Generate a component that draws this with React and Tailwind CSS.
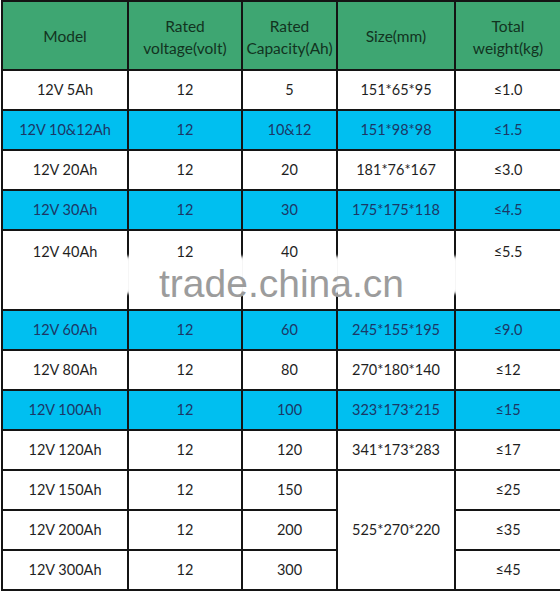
import React from "react";

const rows = [
  { model: "12V 5Ah", cap: "5", size: "151*65*95", weight: "≤1.0" },
  { model: "12V 10&12Ah", cap: "10&12", size: "151*98*98", weight: "≤1.5", blue: true },
  { model: "12V 20Ah", cap: "20", size: "181*76*167", weight: "≤3.0" },
  { model: "12V 30Ah", cap: "30", size: "175*175*118", weight: "≤4.5", blue: true },
  { model: "12V 40Ah", cap: "40", size: "", weight: "≤5.5", tall: true },
  { model: "12V 60Ah", cap: "60", size: "245*155*195", weight: "≤9.0", blue: true },
  { model: "12V 80Ah", cap: "80", size: "270*180*140", weight: "≤12" },
  { model: "12V 100Ah", cap: "100", size: "323*173*215", weight: "≤15", blue: true },
  { model: "12V 120Ah", cap: "120", size: "341*173*283", weight: "≤17" },
  { model: "12V 150Ah", cap: "150", size: "525*270*220", weight: "≤25", span: 3 },
  { model: "12V 200Ah", cap: "200", weight: "≤35", skip: true },
  { model: "12V 300Ah", cap: "300", weight: "≤45", skip: true },
];

const cell = "border-2 border-[#141414] text-center";

const App = () => {
  return (
    <div
      className="relative w-[560px] h-[591px] bg-white overflow-hidden"
      style={{ fontFamily: "Lato, 'Open Sans', sans-serif" }}
    >
      <table className="table-fixed border-collapse w-[559px] ml-[1px] text-[14.5px]">
        <colgroup>
          <col className="w-[126px]" />
          <col className="w-[114px]" />
          <col className="w-[95px]" />
          <col className="w-[118px]" />
          <col className="w-[106px]" />
        </colgroup>
        <thead>
          {/* Header */}
          <tr className="h-[69px] bg-[#3ea672] text-[#12331f] text-[15.5px] leading-[22px]">
            <th className={`${cell} font-normal`}>Model</th>
            <th className={`${cell} font-normal pt-[3px]`}>
              Rated
              <br />
              voltage(volt)
            </th>
            <th className={`${cell} font-normal pt-[3px]`}>
              Rated
              <br />
              Capacity(Ah)
            </th>
            <th className={`${cell} font-normal`}>Size(mm)</th>
            <th className={`${cell} font-normal pt-[3px]`}>
              Total
              <br />
              weight(kg)
            </th>
          </tr>
        </thead>
        <tbody>
          {rows.map((r) => (
            <tr
              key={r.model}
              className={`${r.tall ? "h-[80px]" : "h-[40px]"} ${
                r.blue ? "bg-[#00bff0] text-[#1c3766]" : "bg-white text-[#1f1f1f]"
              }`}
            >
              <td className={`${cell} ${r.tall ? "align-top pt-[10px]" : ""}`}>{r.model}</td>
              <td className={`${cell} ${r.tall ? "align-top pt-[10px]" : ""}`}>12</td>
              <td className={`${cell} ${r.tall ? "align-top pt-[10px]" : ""}`}>{r.cap}</td>
              {!r.skip && (
                <td rowSpan={r.span || 1} className={cell}>
                  {r.size}
                </td>
              )}
              <td className={`${cell} ${r.tall ? "align-top pt-[10px]" : ""}`}>{r.weight}</td>
            </tr>
          ))}
        </tbody>
      </table>

      {/* watermark band */}
      <div className="absolute left-0 top-[254px] w-[560px] h-[44px] pointer-events-none">
        {[127, 241, 336, 454, 558].map((x) => (
          <div
            key={x}
            className="absolute top-[2px] w-[8px] h-[38px] rounded-full bg-white blur-[1.5px]"
            style={{ left: x - 4 }}
          />
        ))}
        <div
          className="absolute left-[159px] top-[10px] text-[39px] leading-[39px] text-[#9c9c9c]"
          style={{ fontFamily: "'Liberation Sans', Arial, sans-serif" }}
        >
          trade.china.cn
        </div>
      </div>
    </div>
  );
};

export default App;
